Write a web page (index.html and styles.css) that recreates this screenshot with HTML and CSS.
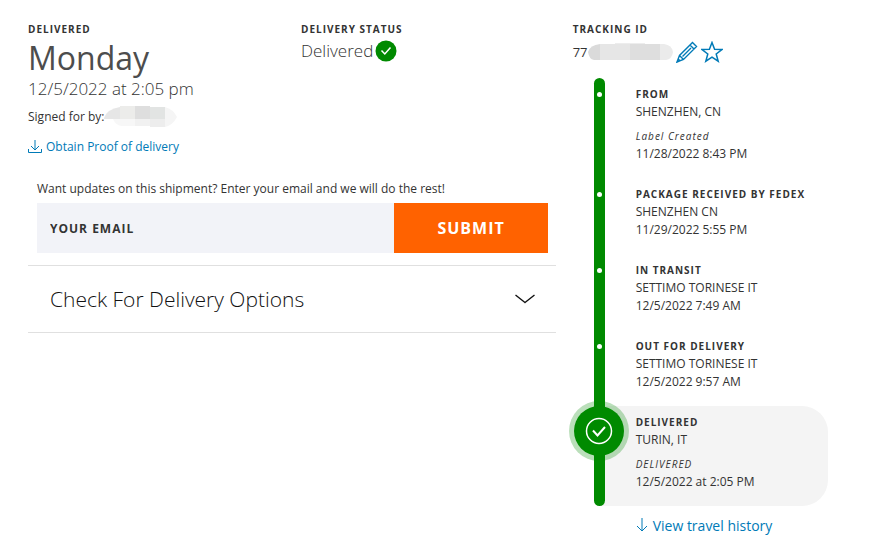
FILE: index.html
```html
<!DOCTYPE html>
<html lang="en">
<head>
<meta charset="utf-8">
<title>Shipment tracking</title>
<link rel="stylesheet" href="styles.css">
</head>
<body>
<main class="page">
  <div class="main">
    <div class="summary">
      <section>
        <h2 class="label">DELIVERED</h2>
        <p class="day">Monday</p>
        <p class="when">12/5/2022 at 2:05 pm</p>
        <p class="signed">Signed for by:<svg class="mask" width="73" height="22" viewBox="0 0 73 22" aria-hidden="true"><path fill="#f7f7f7" d="M9 13h50v7H18q-6 0-9-7z"/><path fill="#e6e6e6" d="M0 12Q3 3 16 1v12H0z"/><path fill="#ececea" d="M16 0h15v13H16z"/><path fill="#dedede" d="M31 0h15v13H31z"/><path fill="#e2e4e3" d="M46 1h15v12H46z"/><path fill="#f5f5f5" d="M61 1q8 2 12 10-4 8-12 10z"/><path fill="#f1f1f1" d="M31 13h15v7H31z"/><path fill="#ededed" d="M46 13h15v8H46z"/></svg></p>
        <a class="proof" href="#proof"><svg width="14" height="17" viewBox="0 0 14 17" fill="none" stroke="#007ab7" aria-hidden="true"><path d="M.5 10v3.500h13V10M7 1v10M3 7l4 4 4-4"/></svg>Obtain Proof of delivery</a>
      </section>
      <section>
        <h2 class="label">DELIVERY STATUS</h2>
        <p class="status">Delivered<svg width="22" height="22" viewBox="0 0 22 22" aria-hidden="true"><circle cx="11" cy="11" r="10.500" fill="#008a00"/><path d="M6.500 10.500l3.300 3.500 5.700-6.500" fill="none" stroke="#fff" stroke-width="1.500"/></svg></p>
      </section>
    </div>
    <form class="updates">
      <label for="email">Want updates on this shipment? Enter your email and we will do the rest!</label>
      <div class="field">
        <input id="email" type="email" placeholder="YOUR EMAIL">
        <button type="button">SUBMIT</button>
      </div>
    </form>
    <button class="options" type="button">Check For Delivery Options<svg width="20" height="10" viewBox="0 0 20 10" fill="none" stroke="#111" stroke-width="1.400" aria-hidden="true"><path d="M.5 1Q5.500 5 10 8.500 14.500 5 19.500 1"/></svg></button>
  </div>
  <aside class="tracking">
    <h2 class="label">TRACKING ID</h2>
    <div class="number">77<svg class="mask" width="86" height="18" viewBox="0 0 86 18" aria-hidden="true"><path fill="#ededed" d="M27 0h30v2H27z"/><path fill="#dadada" d="M12 1v16H6Q1 16 0 9 2 2 12 1z"/><path fill="#e6e6e6" d="M12 1h30v16H12z"/><path fill="#dedede" d="M42 1h30v16H42z"/><path fill="#ebebeb" d="M72 1h4q8 1 9 8-1 7-7 8h-6z"/></svg>
      <button class="icon" type="button" aria-label="Edit nickname"><svg width="22" height="22" viewBox="0 0 22 22" fill="none" stroke="#007ab7" stroke-width="1.400" aria-hidden="true"><path d="M1 21l2.500-6.500L16.500 1.500l4 4L7.500 18.500zM3.500 14.500l4 4M14 4l4 4M6.500 15.500L15 7M1 21l3-1.200-1.800-1.800z"/></svg></button>
      <button class="icon" type="button" aria-label="Add to watch list"><svg width="22" height="22" viewBox="0 0 22 22" fill="none" stroke="#007ab7" stroke-width="1.500" aria-hidden="true"><path d="M11 1.500l2.600 6.700 7.400.3-5.800 4.500 2 7.200L11 16.200l-6.200 4 2-7.200L1 8.500l7.400-.3z"/></svg></button>
    </div>
    <ol class="timeline">
      <li><h3 class="label">FROM</h3><p>SHENZHEN, CN</p><p class="note">Label Created</p><p>11/28/2022 8:43 PM</p></li>
      <li><h3 class="label">PACKAGE RECEIVED BY FEDEX</h3><p>SHENZHEN CN</p><p>11/29/2022 5:55 PM</p></li>
      <li><h3 class="label">IN TRANSIT</h3><p>SETTIMO TORINESE IT</p><p>12/5/2022 7:49 AM</p></li>
      <li><h3 class="label">OUT FOR DELIVERY</h3><p>SETTIMO TORINESE IT</p><p>12/5/2022 9:57 AM</p></li>
      <li class="current"><svg class="badge" width="60" height="60" viewBox="0 0 60 60" aria-hidden="true"><circle cx="30" cy="30" r="30" fill="#008a00" fill-opacity=".27"/><circle cx="30" cy="30" r="25" fill="#008a00"/><g fill="none" stroke="#fff"><circle cx="30" cy="30" r="12.500" stroke-width="1.500"/><path d="M24 29.500l4.500 5 7.500-8.500" stroke-width="2"/></g></svg><h3 class="label">DELIVERED</h3><p>TURIN, IT</p><p class="note">DELIVERED</p><p>12/5/2022 at 2:05 PM</p></li>
    </ol>
    <a class="history" href="#history"><svg width="12" height="16" viewBox="0 0 12 16" fill="none" stroke="#007ab7" aria-hidden="true"><path d="M6 0v13M1 8l5 5 5-5"/></svg>View travel history</a>
  </aside>
</main>
</body>
</html>
```
FILE: styles.css
```css
* { box-sizing: border-box; }

body {
  margin: 0;
  background: #fff;
  color: #333;
  font: 12px/18px "Open Sans", "Noto Sans", sans-serif;
}

h2, h3, p, ol { margin: 0; padding: 0; }

button {
  border: 0;
  padding: 0;
  background: none;
  font-family: inherit;
  color: inherit;
  cursor: pointer;
}

a { color: #007ab7; text-decoration: none; }

.page {
  display: grid;
  grid-template-columns: 2fr 1fr;
  padding: 20px 46px 16px 28px;
}

.main { padding-right: 17px; }

.label {
  font-size: 10px;
  line-height: 18px;
  font-weight: 700;
  letter-spacing: 1px;
}

.summary {
  display: grid;
  grid-template-columns: 273px 1fr;
}

.day {
  font-size: 32px;
  line-height: 40px;
  font-weight: 400;
  color: #4d4d4d;
}

.when {
  font-size: 17px;
  line-height: 22px;
  font-weight: 300;
}

.signed {
  display: flex;
  align-items: center;
  height: 34px;
}

.mask { flex: none; }

.proof {
  display: flex;
  align-items: center;
  gap: 4px;
  height: 26px;
}

.status {
  display: flex;
  align-items: center;
  gap: 2px;
  font-size: 17px;
  line-height: 26px;
  font-weight: 300;
}

.updates { padding: 20px 8px 12px 9px; }

.updates label {
  display: block;
  padding-bottom: 5px;
}

.field {
  display: grid;
  grid-template-columns: 7fr 3fr;
  height: 50px;
}

.field input {
  min-width: 0;
  border: 0;
  border-radius: 0;
  padding: 0 13px;
  background: #f2f3f8;
  font: 700 12px "Open Sans", sans-serif;
  letter-spacing: 1px;
}

.field input::placeholder { color: #333; opacity: 1; }

.field button {
  background: #ff6200;
  color: #fff;
  font-size: 16px;
  font-weight: 700;
  letter-spacing: 1px;
}

.options {
  display: flex;
  align-items: center;
  justify-content: space-between;
  width: 100%;
  height: 68px;
  padding: 0 21px 0 22px;
  border-top: 1px solid #e0e0e0;
  border-bottom: 1px solid #e0e0e0;
  color: #111;
  font-size: 21px;
  font-weight: 300;
}

.number {
  display: flex;
  align-items: center;
  height: 28px;
  font-size: 13px;
}

.icon { height: 22px; margin-left: 3px; }

.mask + .icon { margin-left: 2px; }

.icon svg { display: block; }

.timeline {
  position: relative;
  margin-top: 12px;
  padding-left: 26px;
  list-style: none;
}

.timeline::before {
  content: "";
  position: absolute;
  z-index: 1;
  top: 0;
  bottom: 0;
  left: 21px;
  width: 11px;
  border-radius: 6px;
  background: #008a00;
}

.timeline li {
  position: relative;
  padding: 7px 0 15px 37px;
}

.timeline li::before {
  content: "";
  position: absolute;
  z-index: 2;
  top: 14px;
  left: -2px;
  width: 5px;
  height: 5px;
  border-radius: 50%;
  background: #fff;
}

.note {
  padding-top: 6px;
  font-size: 10px;
  font-style: italic;
  letter-spacing: 1px;
}

.timeline .current {
  margin-right: 17px;
  border-radius: 0 26px 26px 0;
  background: #f4f4f4;
}

.timeline .current::before { display: none; }

.badge {
  position: absolute;
  z-index: 3;
  top: -5px;
  left: -30px;
}

.history {
  display: flex;
  align-items: center;
  gap: 5px;
  margin: 10px 0 0 63px;
  font-size: 14px;
  line-height: 20px;
}
```
